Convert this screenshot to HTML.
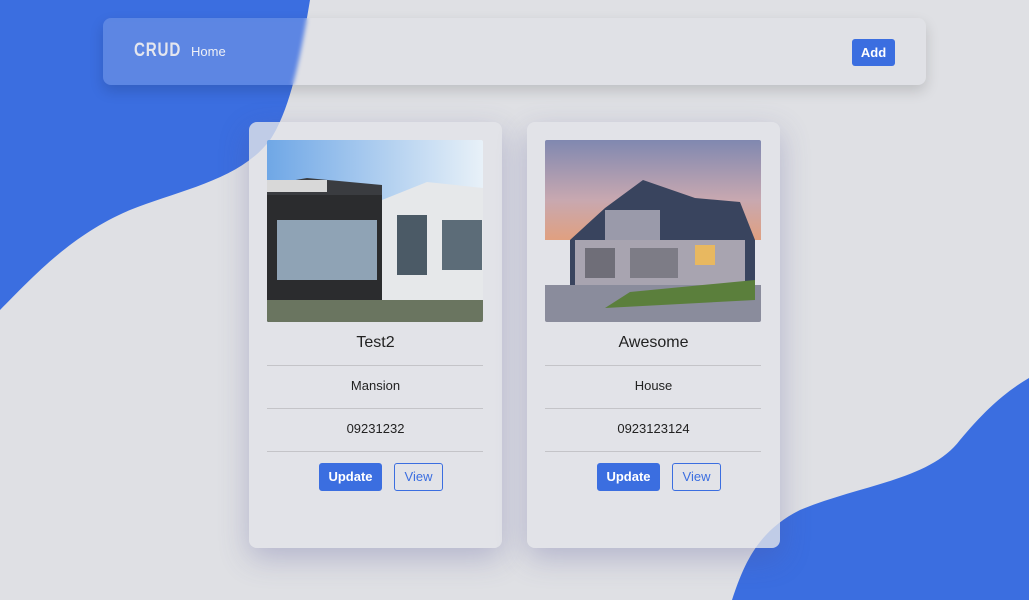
<!DOCTYPE html>
<html><head><meta charset="utf-8"><style>
*{box-sizing:border-box;margin:0;padding:0}
body{width:1029px;height:600px;overflow:hidden;background:#dfe0e4;font-family:"Liberation Sans",sans-serif;position:relative}
.bg{position:absolute;left:0;top:0}
.nav{position:absolute;left:103px;top:18px;width:823px;height:67px;border-radius:8px;background:rgba(230,232,238,0.2);box-shadow:0 6px 14px rgba(0,0,0,0.15);backdrop-filter:blur(2px)}
.logo{position:absolute;left:31px;top:22px;color:#e4e6ee;font-weight:bold;font-size:19px;letter-spacing:1px;transform:scaleX(0.8);transform-origin:left}
.home{position:absolute;left:88px;top:26px;color:#eef0f6;font-size:13px}
.add{position:absolute;left:749px;top:21px;width:43px;height:27px;background:#3b6ee0;color:#fff;font-size:13px;font-weight:bold;border-radius:3px;text-align:center;line-height:27px}
.card{position:absolute;top:122px;width:253px;height:426px;border-radius:8px;background:rgba(226,227,232,0.8);box-shadow:0 10px 30px rgba(80,80,150,0.3)}
.img{position:absolute;left:18px;top:18px;width:216px;height:182px;border-radius:2px;overflow:hidden}
.t{position:absolute;left:0;width:100%;text-align:center;color:#222}
.hr{position:absolute;left:18px;width:216px;height:1px;background:#c4c4c8}
.b{position:absolute;top:341px;height:28px;border-radius:3px;font-size:13px;text-align:center;line-height:26px}
.up{left:70px;width:63px;background:#3b6ee0;color:#fff;font-weight:bold;border:1px solid #3b6ee0}
.vw{left:145px;width:49px;color:#3b6ee0;border:1px solid #3b6ee0}
</style></head><body>
<svg class="bg" width="1029" height="600"><path d="M0 0H310C300 60 290 110 270 140C240 180 180 190 130 210C70 235 30 280 0 310Z" fill="#3b6ee0"/><path d="M1029 378V600H732C745 560 760 530 800 510C860 485 930 480 960 440C985 410 1005 392 1029 378Z" fill="#3b6ee0"/></svg>
<div class="nav"><div class="logo">CRUD</div><div class="home">Home</div><div class="add">Add</div></div>

<div class="card" style="left:249px">
<div class="img"><svg width="216" height="182"><defs><linearGradient id="s1" x1="0" y1="0" x2="1" y2="0"><stop offset="0" stop-color="#6fa7e6"/><stop offset="1" stop-color="#e8f1f8"/></linearGradient></defs><rect width="216" height="182" fill="url(#s1)"/><path d="M0 45L40 38L115 45V182H0Z" fill="#3a3c40"/><rect x="0" y="55" width="115" height="127" fill="#2b2c2e"/><rect x="10" y="80" width="100" height="60" fill="#8fa3b5"/><rect x="0" y="40" width="60" height="12" fill="#d8d8d8"/><path d="M115 60L160 42L216 48V182H115Z" fill="#e6e8ea"/><rect x="130" y="75" width="30" height="60" fill="#4b5a66"/><rect x="175" y="80" width="40" height="50" fill="#5c6c78"/><rect x="0" y="160" width="216" height="22" fill="#6a7560"/></svg></div>
<div class="t" style="top:212px;font-size:16px">Test2</div>
<div class="hr" style="top:243px"></div>
<div class="t" style="top:256px;font-size:13px">Mansion</div>
<div class="hr" style="top:286px"></div>
<div class="t" style="top:299px;font-size:13px">09231232</div>
<div class="hr" style="top:329px"></div>
<div class="b up">Update</div><div class="b vw">View</div>
</div>

<div class="card" style="left:527px">
<div class="img"><svg width="216" height="182"><defs><linearGradient id="s2" x1="0" y1="0" x2="0" y2="1"><stop offset="0" stop-color="#8088b0"/><stop offset="0.6" stop-color="#c8a8b0"/><stop offset="1" stop-color="#e0a080"/></linearGradient></defs><rect width="216" height="100" fill="url(#s2)"/><path d="M60 68L98 40L150 58L195 62L210 100V150H25V100Z" fill="#39445e"/><rect x="30" y="100" width="170" height="52" fill="#a8a4b0"/><rect x="60" y="70" width="55" height="30" fill="#9a9aaa"/><rect x="40" y="108" width="30" height="30" fill="#6f6e78"/><rect x="85" y="108" width="48" height="30" fill="#7d7c86"/><rect x="150" y="105" width="20" height="20" fill="#e8b860"/><rect x="0" y="145" width="216" height="37" fill="#8a8c9c"/><path d="M85 152L210 140V160L60 168Z" fill="#5b7f3c"/></svg></div>
<div class="t" style="top:212px;font-size:16px">Awesome</div>
<div class="hr" style="top:243px"></div>
<div class="t" style="top:256px;font-size:13px">House</div>
<div class="hr" style="top:286px"></div>
<div class="t" style="top:299px;font-size:13px">0923123124</div>
<div class="hr" style="top:329px"></div>
<div class="b up">Update</div><div class="b vw">View</div>
</div>
</body></html>
